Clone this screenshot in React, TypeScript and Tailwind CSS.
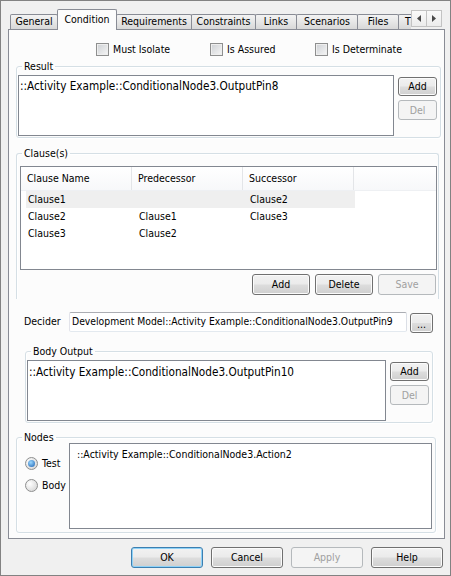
import React from "react";

const btnNormal =
  "border-[#707070] bg-[linear-gradient(to_bottom,#f2f2f2_0%,#ebebeb_48%,#dddddd_52%,#cfcfcf_100%)] shadow-[inset_0_0_0_1px_#fbfbfb] text-black";
const btnDisabled = "border-[#b5b9bc] bg-[#f4f4f4] text-[#a0a0a0]";
const btnDefault =
  "border-[#3c7fb1] bg-[linear-gradient(to_bottom,#f2f2f2_0%,#ebebeb_48%,#dddddd_52%,#cfcfcf_100%)] shadow-[inset_0_0_0_1px_#8fd2f7] text-black";

function Btn({
  label,
  size,
  kind = "normal",
  extra = "",
}: {
  label: string;
  size: string;
  kind?: "normal" | "disabled" | "default";
  extra?: string;
}) {
  const k = kind === "disabled" ? btnDisabled : kind === "default" ? btnDefault : btnNormal;
  return (
    <div
      className={`flex shrink-0 items-center justify-center rounded-[3px] border leading-none ${k} ${size} ${extra}`}
    >
      {label}
    </div>
  );
}

function Check({ label, w }: { label: string; w: string }) {
  return (
    <div className={`flex items-center gap-[4px] ${w}`}>
      <span className="h-[13px] w-[13px] shrink-0 border border-[#8e8f8f] bg-[linear-gradient(135deg,#cdd0d4,#f6f6f6)] shadow-[inset_0_0_0_1px_#eeeeee]" />
      <span className="leading-[13px]">{label}</span>
    </div>
  );
}

function Radio({ label, checked }: { label: string; checked?: boolean }) {
  return (
    <div className="flex h-[13px] items-center gap-[4px]">
      <span className="flex h-[13px] w-[13px] shrink-0 items-center justify-center rounded-full border border-[#8e8f8f] bg-[radial-gradient(circle_at_35%_35%,#ffffff,#cfcfcf)]">
        {checked && (
          <span className="h-[7px] w-[7px] rounded-full bg-[radial-gradient(circle_at_40%_35%,#9ad8ff,#1b5fb0)]" />
        )}
      </span>
      <span className="leading-[13px]">{label}</span>
    </div>
  );
}

const legend = "ml-[5px] px-[2px] leading-[12px]";
const groupBorder =
  "rounded-[3px] border border-[#d5dfe5] shadow-[inset_1px_1px_0_#ffffff,1px_1px_0_#ffffff]";

export default function App() {
  const tabs: { label: string; w: string; sel?: boolean; left?: boolean }[] = [
    { label: "General", w: "w-[48px]" },
    { label: "Condition", w: "w-[60px]", sel: true },
    { label: "Requirements", w: "w-[76px]" },
    { label: "Constraints", w: "w-[65px]" },
    { label: "Links", w: "w-[42px]" },
    { label: "Scenarios", w: "w-[62px]" },
    { label: "Files", w: "w-[42px]" },
    { label: "T", w: "w-[30px]", left: true },
  ];

  return (
    <div className="flex h-[576px] w-[451px] flex-col border border-[#828282] bg-[#f0f0f0] font-['DejaVu_Sans_Condensed','DejaVu_Sans',sans-serif] text-[10.5px] text-black">
      {/* tab strip */}
      <div className="relative z-10 ml-[9px] mt-[8px] flex h-[20px]">
        <div className="flex h-[21px] w-[401px] items-end overflow-hidden">
          {tabs.map((t, i) =>
            t.sel ? (
              <div
                key={t.label}
                className={`${t.w} -ml-px flex h-[21px] shrink-0 items-center justify-center rounded-t-[2px] border border-b-0 border-[#898c95] bg-[#fcfcfc]`}
              >
                {t.label}
              </div>
            ) : (
              <div
                key={t.label}
                className={`${t.w} ${i === 0 ? "" : "-ml-px"} mb-[1px] flex h-[15px] shrink-0 items-center ${
                  t.left ? "justify-start pl-[6px]" : "justify-center"
                } whitespace-nowrap rounded-t-[2px] border border-b-0 border-[#898c95] bg-[linear-gradient(to_bottom,#f3f3f3,#e6e6e6_50%,#d8d8d8)]`}
              >
                {t.label}
              </div>
            )
          )}
        </div>
        <div className="mt-[1px] flex h-[17px] self-start">
          <div className="flex h-[17px] w-[16px] items-center justify-center border border-[#c3c3c3] bg-[linear-gradient(to_bottom,#fafafa,#ececec)]">
            <svg width="4" height="7" viewBox="0 0 4 7">
              <path d="M4 0 L0 3.5 L4 7 Z" fill="#4a4a4a" />
            </svg>
          </div>
          <div className="-ml-px flex h-[17px] w-[16px] items-center justify-center border border-[#c3c3c3] bg-[linear-gradient(to_bottom,#fafafa,#ececec)]">
            <svg width="4" height="7" viewBox="0 0 4 7">
              <path d="M0 0 L4 3.5 L0 7 Z" fill="#4a4a4a" />
            </svg>
          </div>
        </div>
      </div>

      {/* tab panel */}
      <div className="ml-[7px] flex h-[510px] w-[437px] flex-col border border-[#898c95] bg-[#fcfcfc]">
        {/* checkboxes */}
        <div className="ml-[87px] mt-[13px] flex h-[13px] items-center">
          <Check label="Must Isolate" w="w-[114px]" />
          <Check label="Is Assured" w="w-[105px]" />
          <Check label="Is Determinate" w="w-[120px]" />
        </div>

        {/* Result */}
        <fieldset className={`ml-[7px] mt-[4px] h-[78px] w-[425px] ${groupBorder}`}>
          <legend className={legend}>Result</legend>
          <div className="flex pl-[1px] pt-[3px]">
            <div className="h-[61px] w-[376px] border border-[#828790] bg-white pl-[1px] pt-[4px] text-[11.7px] leading-[13px]">
              ::Activity Example::ConditionalNode3.OutputPin8
            </div>
            <div className="ml-[4px] mt-[2px] flex flex-col gap-[4px]">
              <Btn label="Add" size="h-[19px] w-[39px]" />
              <Btn label="Del" size="h-[20px] w-[39px]" kind="disabled" />
            </div>
          </div>
        </fieldset>

        {/* Clauses */}
        <fieldset className="ml-[7px] mt-[9px] h-[152px] w-[423px] rounded-t-[3px] border border-b-0 border-[#d5dfe5] shadow-[inset_1px_1px_0_#ffffff]">
          <legend className={legend}>Clause(s)</legend>
          <div className="pl-[3px] pt-[7px]">
            <div className="h-[104px] w-[417px] border border-[#828790] bg-white">
              <div className="flex h-[24px] border-b border-[#eef0f3] bg-[linear-gradient(to_bottom,#ffffff,#f7f8fa)]">
                <div className="flex w-[111px] items-center border-r border-[#e3e5e8] pl-[6px]">Clause Name</div>
                <div className="flex w-[111px] items-center border-r border-[#e3e5e8] pl-[6px]">Predecessor</div>
                <div className="flex w-[111px] items-center border-r border-[#e3e5e8] pl-[6px]">Successor</div>
              </div>
              <div className="ml-[5px] flex h-[17px] w-[329px] items-center bg-[#efefef]">
                <div className="w-[111px] pl-[2px]">Clause1</div>
                <div className="w-[111px] pl-[2px]"></div>
                <div className="w-[107px] pl-[2px]">Clause2</div>
              </div>
              <div className="ml-[5px] flex h-[17px] w-[329px] items-center">
                <div className="w-[111px] pl-[2px]">Clause2</div>
                <div className="w-[111px] pl-[2px]">Clause1</div>
                <div className="w-[107px] pl-[2px]">Clause3</div>
              </div>
              <div className="ml-[5px] flex h-[17px] w-[329px] items-center">
                <div className="w-[111px] pl-[2px]">Clause3</div>
                <div className="w-[111px] pl-[2px]">Clause2</div>
                <div className="w-[107px] pl-[2px]"></div>
              </div>
            </div>
            <div className="mt-[4px] flex w-[417px] justify-end gap-[5px] pr-[1px]">
              <Btn label="Add" size="h-[21px] w-[58px]" />
              <Btn label="Delete" size="h-[21px] w-[58px]" />
              <Btn label="Save" size="h-[21px] w-[58px]" kind="disabled" />
            </div>
          </div>
        </fieldset>

        {/* Decider */}
        <div className="mt-[13px] flex pl-[15px]">
          <div className="flex h-[20px] w-[45px] items-center">Decider</div>
          <div className="flex h-[20px] w-[338px] items-center overflow-hidden whitespace-nowrap rounded-[2px] border border-[#abadb3] border-b-[#e3e9ef] border-l-[#e2e3ea] border-r-[#dbdfe6] bg-white pl-[2px] text-[10.3px]">
            Development Model::Activity Example::ConditionalNode3.OutputPin9
          </div>
          <Btn label="..." size="h-[20px] w-[23px]" extra="ml-[3px] mt-[1px] items-end pb-[3px]" />
        </div>

        {/* Body Output */}
        <fieldset className={`ml-[16px] mt-[12px] h-[78px] w-[408px] ${groupBorder}`}>
          <legend className={legend}>Body Output</legend>
          <div className="flex pl-[1px] pt-[3px]">
            <div className="h-[61px] w-[359px] border border-[#828790] bg-white pl-[1px] pt-[5px] text-[11.7px] leading-[13px]">
              ::Activity Example::ConditionalNode3.OutputPin10
            </div>
            <div className="ml-[4px] mt-[2px] flex flex-col gap-[4px]">
              <Btn label="Add" size="h-[19px] w-[39px]" />
              <Btn label="Del" size="h-[20px] w-[39px]" kind="disabled" />
            </div>
          </div>
        </fieldset>

        {/* Nodes */}
        <fieldset className={`ml-[7px] mt-[8px] h-[102px] w-[420px] ${groupBorder}`}>
          <legend className={legend}>Nodes</legend>
          <div className="flex">
            <div className="flex w-[52px] flex-col gap-[9px] pl-[8px] pt-[14px]">
              <Radio label="Test" checked />
              <Radio label="Body" />
            </div>
            <div className="h-[86px] w-[363px] border border-[#828790] bg-white pl-[7px] pt-[4px] leading-[13px]">
              ::Activity Example::ConditionalNode3.Action2
            </div>
          </div>
        </fieldset>
      </div>

      {/* dialog buttons */}
      <div className="mt-[8px] flex justify-end gap-[8px] pr-[7px]">
        <Btn label="OK" size="h-[21px] w-[72px]" kind="default" />
        <Btn label="Cancel" size="h-[21px] w-[72px]" />
        <Btn label="Apply" size="h-[21px] w-[72px]" kind="disabled" />
        <Btn label="Help" size="h-[21px] w-[72px]" />
      </div>
    </div>
  );
}
